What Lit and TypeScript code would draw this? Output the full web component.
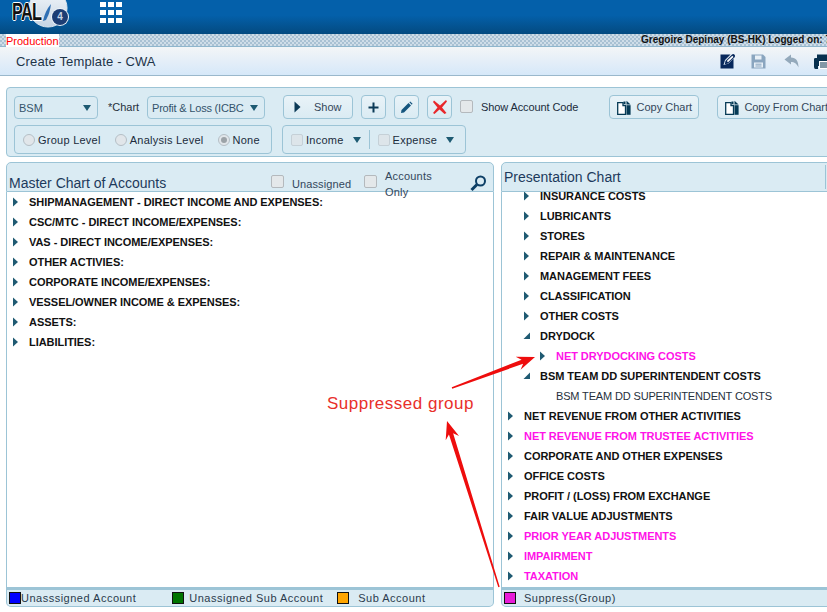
import { LitElement, html, css, svg } from "lit";
import { customElement } from "lit/decorators.js";

type Row = { t: string; l: number; s?: "o" | "e" | "n"; m?: boolean; plain?: boolean };

const leftRows: Row[] = [
  "SHIPMANAGEMENT - DIRECT INCOME AND EXPENSES:",
  "CSC/MTC - DIRECT INCOME/EXPENSES:",
  "VAS - DIRECT INCOME/EXPENSES:",
  "OTHER ACTIVIES:",
  "CORPORATE INCOME/EXPENSES:",
  "VESSEL/OWNER INCOME & EXPENSES:",
  "ASSETS:",
  "LIABILITIES:",
].map((t) => ({ t, l: 0 }));

const rightRows: Row[] = [
  { t: "INSURANCE COSTS", l: 1 },
  { t: "LUBRICANTS", l: 1 },
  { t: "STORES", l: 1 },
  { t: "REPAIR & MAINTENANCE", l: 1 },
  { t: "MANAGEMENT FEES", l: 1 },
  { t: "CLASSIFICATION", l: 1 },
  { t: "OTHER COSTS", l: 1 },
  { t: "DRYDOCK", l: 1, s: "o" },
  { t: "NET DRYDOCKING COSTS", l: 2, m: true },
  { t: "BSM TEAM DD SUPERINTENDENT COSTS", l: 1, s: "o" },
  { t: "BSM TEAM DD SUPERINTENDENT COSTS", l: 2, s: "n", plain: true },
  { t: "NET REVENUE FROM OTHER ACTIVITIES", l: 0 },
  { t: "NET REVENUE FROM TRUSTEE ACTIVITIES", l: 0, m: true },
  { t: "CORPORATE AND OTHER EXPENSES", l: 0 },
  { t: "OFFICE COSTS", l: 0 },
  { t: "PROFIT / (LOSS) FROM EXCHANGE", l: 0 },
  { t: "FAIR VALUE ADJUSTMENTS", l: 0 },
  { t: "PRIOR YEAR ADJUSTMENTS", l: 0, m: true },
  { t: "IMPAIRMENT", l: 0, m: true },
  { t: "TAXATION", l: 0, m: true },
];

const caret = html`<svg class="caret" viewBox="0 0 10 10" width="10" height="10"><path d="M2 0.5 L7 5 L2 9.5Z" /></svg>`;
const caretOpen = html`<svg class="caret" viewBox="0 0 10 10" width="10" height="10"><path d="M8 1.5 L8 8 L1.500 8Z" /></svg>`;
const docIcon = html`<svg class="doc" viewBox="0 0 14 15" width="14" height="15"><path d="M0.7 2.700H6V5.500H8.500V14.300H0.7Z" fill="#fff" stroke="#063a55" stroke-width="1.300"/><path d="M6.500 1.500H8.500V4H6.500Z" fill="#063a55"/><path d="M9.500 0.800 13.600 4.500H9.500Z" fill="#063a55"/><path d="M9.500 5.200H13.600V14.800H9.500Z" fill="#063a55"/></svg>`;

function arrowPoints(x1: number, y1: number, x2: number, y2: number) {
  const len = Math.hypot(x2 - x1, y2 - y1);
  const ux = (x2 - x1) / len;
  const uy = (y2 - y1) / len;
  const nx = -uy;
  const ny = ux;
  const bx = x2 - ux * 15;
  const by = y2 - uy * 15;
  const p = (x: number, y: number, w: number) => `${x + nx * w},${y + ny * w}`;
  const nb = (w: number) => p(bx + ux * 1.5, by + uy * 1.5, w);
  return [p(x1, y1, 0.7), nb(2.2), p(bx - ux * 3, by - uy * 3, 7), `${x2},${y2}`, p(bx - ux * 3, by - uy * 3, -7), nb(-2.2), p(x1, y1, -0.7)].join(" ");
}

@customElement("app-root")
export class AppRoot extends LitElement {
  static styles = css`
    :host {
      display: block;
      width: 827px;
      height: 612px;
      overflow: hidden;
      position: relative;
      background: #fff;
      font-family: "Liberation Sans", Arial, sans-serif;
      font-size: 11px;
      color: #1c2b3a;
    }
    .top {
      height: 34px;
      display: flex;
      background: linear-gradient(#0460aa 0%, #0460aa 45%, #034a80 100%);
    }
    .logo { width: 80px; height: 34px; flex: none; position: relative; }
    .logo svg { display: block; }
    .logo-text {
      position: absolute; left: 12px; top: 0;
      font: bold 24px/24px "Liberation Sans", sans-serif;
      color: #111; letter-spacing: -1px; transform: scaleX(0.68); transform-origin: left top;
      text-shadow: 1px 0 0 #fff, -1px 0 0 #fff, 0 1px 0 #fff, 0 -1px 0 #fff;
    }
    .logo-four {
      position: absolute; left: 54px; top: 11px; width: 12px; text-align: center;
      font: bold 10px/12px "Liberation Sans", sans-serif; color: #c8d4e4;
    }
    .apps {
      margin: 2px 0 0 20px;
      display: grid;
      grid-template-columns: repeat(3, 6px);
      grid-auto-rows: 5px;
      gap: 3px 2px;
      width: 22px;
      height: 21px;
    }
    .apps i { background: #fff; display: block; }
    .strip {
      height: 12px;
      display: flex;
      background-color: #b5cad9;
      background-image: conic-gradient(#a9c1d3 25%, #cfdde8 0 50%, #a9c1d3 0 75%, #cfdde8 0);
      background-size: 4px 4px;
      border-bottom: 1px solid #8fb6cd;
    }
    .prod {
      margin-left: 6px; width: 53px; background: #fff; color: #f00; height: 13px;
      font: 11px/14px "Liberation Sans", sans-serif; white-space: nowrap;
    }
    .user {
      font: bold 10px/12px "Liberation Sans", sans-serif; color: #111; white-space: nowrap;
      margin-left: auto; width: 186px; overflow: hidden;
    }
    .titlebar {
      height: 29px;
      box-sizing: border-box;
      border-bottom: 1px solid #9ab8cc;
      background: linear-gradient(#f3f5f7, #d6e8f9);
      display: flex;
      align-items: center;
      overflow: hidden;
    }
    .title { margin-left: 16px; font-size: 13px; letter-spacing: 0.15px; color: #1d3448; flex: 1; }
    .tools { display: flex; align-items: center; width: 107px; flex: none; }
    .tools svg { flex: none; display: block; }
    .toolbar {
      margin: 11px 0 0 6px;
      height: 70px;
      width: 840px;
      box-sizing: border-box;
      border: 1px solid #9cc4d6;
      border-radius: 4px 0 0 4px;
      background: #daebf3;
      padding: 8px 0 0 7px;
      display: flex;
      flex-direction: column;
      gap: 6px;
    }
    .trow { display: flex; align-items: flex-start; height: 23px; }
    .select {
      height: 23px;
      box-sizing: border-box;
      border: 1px solid #9cc4d6;
      border-radius: 4px;
      display: flex;
      align-items: center;
      justify-content: space-between;
      padding: 0 6px 0 4px;
      color: #33536b;
      font-size: 11px;
    }
    .tri {
      width: 0; height: 0; flex: none;
      border-left: 4px solid transparent; border-right: 4px solid transparent;
      border-top: 6px solid #1d5a72;
    }
    .btn {
      height: 24px;
      box-sizing: border-box;
      border: 1px solid #9cc4d6;
      border-radius: 4px;
      background: linear-gradient(#e9f3f8, #daebf3);
      display: flex;
      align-items: center;
      justify-content: center;
      color: #33475b;
      flex: none;
      margin-top: -1px;
    }
    .radiogroup {
      height: 29px; width: 258px; box-sizing: border-box;
      border: 1px solid #9cc4d6; border-radius: 4px;
      display: flex; align-items: center; padding-left: 8px; flex: none;
    }
    .filtergroup {
      height: 29px; width: 184px; box-sizing: border-box;
      border: 1px solid #9cc4d6; border-radius: 4px;
      display: flex; align-items: center; padding-left: 8px; margin-left: 10px; flex: none;
    }
    .radio {
      width: 10px; height: 10px; border-radius: 50%; border: 1px solid #b5bfc6;
      background: #e1e6ea; flex: none; display: flex; align-items: center; justify-content: center;
    }
    .radio b { width: 6px; height: 6px; border-radius: 50%; background: #9ca3a8; display: block; }
    .lbl { font-size: 11px; color: #202c3c; white-space: nowrap; letter-spacing: 0.25px; }
    .chk {
      width: 11px; height: 11px; border: 1px solid #b4b9bd; border-radius: 2px;
      background: #e4e8ea; flex: none; display: block;
    }
    .fchk { width: 10px; height: 10px; border-color: #c5d0d7; background: #dde5ea; }
    .panels {
      display: grid;
      grid-template-columns: 488px 340px;
      column-gap: 7px;
      margin: 5px 0 0 6px;
      height: 445px;
    }
    .panel { display: flex; flex-direction: column; min-width: 0; position: relative; }
    .phead {
      height: 30px; box-sizing: border-box; flex: none;
      border: 1px solid #9cc4d6; border-radius: 5px 5px 0 0;
      background: #daebf3;
      display: flex; align-items: flex-end; position: relative;
    }
    .ptitle { font-size: 14px; color: #1d3a5c; white-space: nowrap; }
    .body {
      flex: 1; min-height: 0; overflow: hidden;
      border-left: 1px solid #9cc4d6; border-right: 1px solid #9cc4d6;
    }
    .noright { border-right: none; }
    .row { height: 20px; display: flex; align-items: center; white-space: nowrap; }
    .caret { fill: #1f5a72; flex: none; display: block; }
    .slot { width: 18px; flex: none; display: block; }
    .row .txt { font-weight: bold; font-size: 11px; color: #111; letter-spacing: -0.05px; }
    .row.m .txt { color: #ff12e8; }
    .row.plain .txt { font-weight: normal; color: #26303c; letter-spacing: -0.15px; }
    .legend {
      height: 20px; flex: none; box-sizing: border-box;
      border: 1px solid #9cc4d6; border-top: 3px solid #9cc4d6; border-radius: 0 0 5px 5px;
      background: #daebf3;
      display: flex; align-items: center; font-size: 11px; color: #2b3b4d;
      letter-spacing: 0.5px; white-space: nowrap;
    }
    .sw { width: 10px; height: 10px; border: 1px solid #111; flex: none; display: block; }
    .annot { position: absolute; left: 0; top: 0; pointer-events: none; }
    .annot-text { position: absolute; left: 327px; top: 394px; font-size: 17px; line-height: 20px; color: #e8302a; letter-spacing: 0.5px; white-space: nowrap; }
    .wrap2 { white-space: normal; line-height: 16px; font-size: 11px; color: #33475b; letter-spacing: .2px; }
    .bsm { width: 84px; }
    .chartsel { width: 118px; margin-left: 8px; letter-spacing: -0.2px; }
    .chartlbl { margin-left: 10px; line-height: 22px; color: #26303c; font-size: 11px; width: 31px; white-space: nowrap; }
    .show { width: 70px; margin-left: 18px; justify-content: flex-start; padding-left: 10px; }
    .showtxt { margin-left: 13px; }
    .ib { width: 25px; margin-left: 8px; }
    .acct { margin: 4px 0 0 8px; }
    .acct-l { margin: 0 0 0 8px; line-height: 22px; letter-spacing: -0.1px; }
    .cc { width: 90px; margin-left: 31px; gap: 6px; }
    .cf { width: 120px; margin-left: 18px; gap: 5px; justify-content: flex-start; padding-left: 7px; letter-spacing: -0.05px; white-space: nowrap; }
    .sep { width: 1px; height: 19px; background: #9cc4d6; margin: 0 8px; flex: none; }
    .ml3 { margin-left: 3px; }
    .ml9 { margin-left: 9px; }
    .ga { margin-left: 14px; }
    .tl { margin: 0 0 0 2px; }
    .tr { margin: 0 0 6px 2px; }
    .cU { position: absolute; left: 264px; top: 12px; display: flex; align-items: center; }
    .cUt { margin-left: 8px; position: relative; top: 2px; color: #33475b; letter-spacing: .1px; }
    .cA { position: absolute; left: 357px; top: 12px; }
    .aoTxt { position: absolute; left: 378px; top: 5px; width: 60px; }
    .mag { position: absolute; left: 463px; top: 12px; }
    .rdiv { position: absolute; left: 323px; top: 2px; width: 1px; height: 24px; background: #9cc4d6; }
    .tree-right { margin-top: -6px; }
    .t2 { margin-left: 15px; }
    .t3 { margin-left: 18px; }
    .t4 { margin-left: 15px; }
    .lg1 { background: #0000ff; margin-left: 2px; }
    .lg2 { background: #007400; margin-left: 36px; }
    .lg3 { background: #ffa500; margin-left: 14px; }
    .lg4 { background: #e81cd8; margin-left: 2px; }
    .lt2 { margin-left: 5px; }
    .lt3 { margin-left: 9px; }
    .lt4 { margin-left: 8px; }
  `;

  private renderRow(r: Row, base: number) {
    const left = base + r.l * 16;
    const icon = r.s === "n" ? "" : r.s === "o" ? caretOpen : caret;
    return html`<div class="row ${r.m ? "m" : ""} ${r.plain ? "plain" : ""}" style="padding-left:${left}px">
      <span class="slot">${icon}</span>
      <span class="txt">${r.t}</span>
    </div>`;
  }

  render() {
    return html`
      <div class="top">
        <div class="logo">
          <svg width="80" height="34" viewBox="0 0 80 34">
            <defs>
              <linearGradient id="cl" x1="0" y1="0" x2="0" y2="1">
                <stop offset="0" stop-color="#f4f7fa"/>
                <stop offset="1" stop-color="#c5d4e4"/>
              </linearGradient>
            </defs>
            <circle cx="48" cy="8" r="19" fill="url(#cl)" stroke="#dfe8f0" stroke-width="1"/>
            <path d="M43 21 Q45 11 51 4 Q50 13 46 20 Z" fill="#2f6fb4"/>
            <circle cx="60" cy="17" r="9" fill="#eef3f8"/>
            <circle cx="60" cy="17" r="8" fill="#1c3d74"/>
          </svg>
          <span class="logo-text">PAL</span>
          <span class="logo-four">4</span>
        </div>
        <div class="apps">${Array.from({ length: 9 }, () => html`<i></i>`)}</div>
      </div>
      <div class="strip">
        <span class="prod">Production</span>
        <span class="user">Gregoire Depinay (BS-HK) Logged on: 7</span>
      </div>
      <div class="titlebar">
        <span class="title">Create Template - CWA</span>
        <div class="tools">
          <svg width="16" height="16" viewBox="0 0 16 16"><path d="M0.500 1.500H10.500L5 7 3.500 12 8.500 10.500 13.500 5.500V15.500H0.500Z" fill="#07285c"/><path d="M5.500 8 12 1.500Q13.500 0.500 14.800 2 15.500 3.200 14.500 4.200L8 10.500 4.800 11.200Z" fill="#07285c"/><path d="M6.800 8 12.300 2.800 13.500 4 8 9.300Z" fill="#fff"/></svg>
          <svg class="t2" width="15" height="15" viewBox="0 0 15 15"><path d="M0.500 0.500H12L14.500 3V14.500H0.500Z" fill="#8aa5bf"/><path d="M4 1.500H10.500V5.500H4Z M3 8.500H12V13.500H3Z" fill="#e8f0f7"/><path d="M4.500 10.200H10.500M4.500 12H10.500" stroke="#8aa5bf"/></svg>
          <svg class="t3" width="15" height="14" viewBox="0 0 15 14"><path d="M0.500 5.500 7 0.500V3.500C12 3.500 14.500 7 14.500 13.500 12.500 9.500 10.500 8 7 8V10.500Z" fill="#94a9bb"/></svg>
          <svg class="t4" width="16" height="15" viewBox="0 0 16 15"><path d="M3 0.500H16V4H3Z M0 5 Q0 4 1.500 4H16V12H4V15H1.500Q0 15 0 13Z" fill="#07304f"/><path d="M5 7H16V15H5Z" fill="#fff"/><path d="M6 9H16M6 11H16M6 13H16" stroke="#07304f"/></svg>
        </div>
      </div>
      <div class="toolbar">
        <div class="trow">
          <div class="select bsm"><span>BSM</span><i class="tri"></i></div>
          <span class="chartlbl">*Chart</span>
          <div class="select chartsel"><span>Profit &amp; Loss (ICBC</span><i class="tri"></i></div>
          <div class="btn show">
            <svg width="7" height="12" viewBox="0 0 7 12"><path d="M0.500 0.500 6.500 6 0.500 11.500Z" fill="#0b3a57"/></svg>
            <span class="showtxt">Show</span>
          </div>
          <div class="btn ib"><svg width="11" height="11" viewBox="0 0 11 11"><path d="M5.500 0.500V10.500M0.500 5.500H10.500" stroke="#0b3a57" stroke-width="2"/></svg></div>
          <div class="btn ib"><svg width="13" height="13" viewBox="0 0 13 13"><path d="M1 12 1.500 9 8.500 2 11 4.500 4 11.500Z" fill="#14557e"/><path d="M9.300 1.200 10.200 0.400 12.600 2.800 11.800 3.700Z" fill="#14557e"/></svg></div>
          <div class="btn ib"><svg width="16" height="16" viewBox="0 0 16 16"><path d="M2 1.500 8 6.500 14 1 15 2.500 10 8.500 14.500 14 12.500 15 7.500 10.500 2.500 15 1 14 5.500 8.500 1 3Z" fill="#e8282c"/></svg></div>
          <i class="chk acct"></i>
          <span class="lbl acct-l">Show Account Code</span>
          <div class="btn cc">${docIcon}<span>Copy Chart</span></div>
          <div class="btn cf">${docIcon}<span>Copy From Chart</span></div>
        </div>
        <div class="trow">
          <div class="radiogroup">
            <span class="radio"></span><span class="lbl ml3">Group Level</span>
            <span class="radio ga"></span><span class="lbl ml3">Analysis Level</span>
            <span class="radio ga"><b></b></span><span class="lbl ml3">None</span>
          </div>
          <div class="filtergroup">
            <i class="chk fchk"></i><span class="lbl ml3">Income</span>
            <i class="tri ml9"></i>
            <span class="sep"></span>
            <i class="chk fchk"></i><span class="lbl ml3">Expense</span>
            <i class="tri ml9"></i>
          </div>
        </div>
      </div>
      <div class="panels">
        <div class="panel">
          <div class="phead">
            <span class="ptitle tl">Master Chart of Accounts</span>
            <div class="cU"><i class="chk"></i><span class="cUt">Unassigned</span></div>
            <i class="chk cA"></i>
            <span class="wrap2 aoTxt">Accounts Only</span>
            <svg class="mag" width="17" height="17" viewBox="0 0 17 17"><circle cx="10.500" cy="6" r="4.500" fill="none" stroke="#0d3f66" stroke-width="2"/><path d="M7 9.500 1.500 15" stroke="#0d3f66" stroke-width="3"/></svg>
          </div>
          <div class="body"><div>${leftRows.map((r) => this.renderRow(r, 4))}</div></div>
          <div class="legend">
            <i class="sw lg1"></i><span>Unasssigned Account</span>
            <i class="sw lg2"></i><span class="lt2">Unassigned Sub Account</span>
            <i class="sw lg3"></i><span class="lt3">Sub Account</span>
          </div>
        </div>
        <div class="panel">
          <div class="phead">
            <span class="ptitle tr">Presentation Chart</span>
            <span class="rdiv"></span>
          </div>
          <div class="body noright"><div class="tree-right">${rightRows.map((r) => this.renderRow(r, 4))}</div></div>
          <div class="legend noright">
            <i class="sw lg4"></i><span class="lt4">Suppress(Group)</span>
          </div>
        </div>
      </div>
      <svg class="annot" width="827" height="612" viewBox="0 0 827 612">
        ${svg`<polygon points="${arrowPoints(452, 388, 535, 357)}" fill="#ee0d0d"/>
        <polygon points="${arrowPoints(499, 587, 447, 421)}" fill="#ee0d0d"/>`}
      </svg>
      <span class="annot-text">Suppressed group</span>
    `;
  }
}
